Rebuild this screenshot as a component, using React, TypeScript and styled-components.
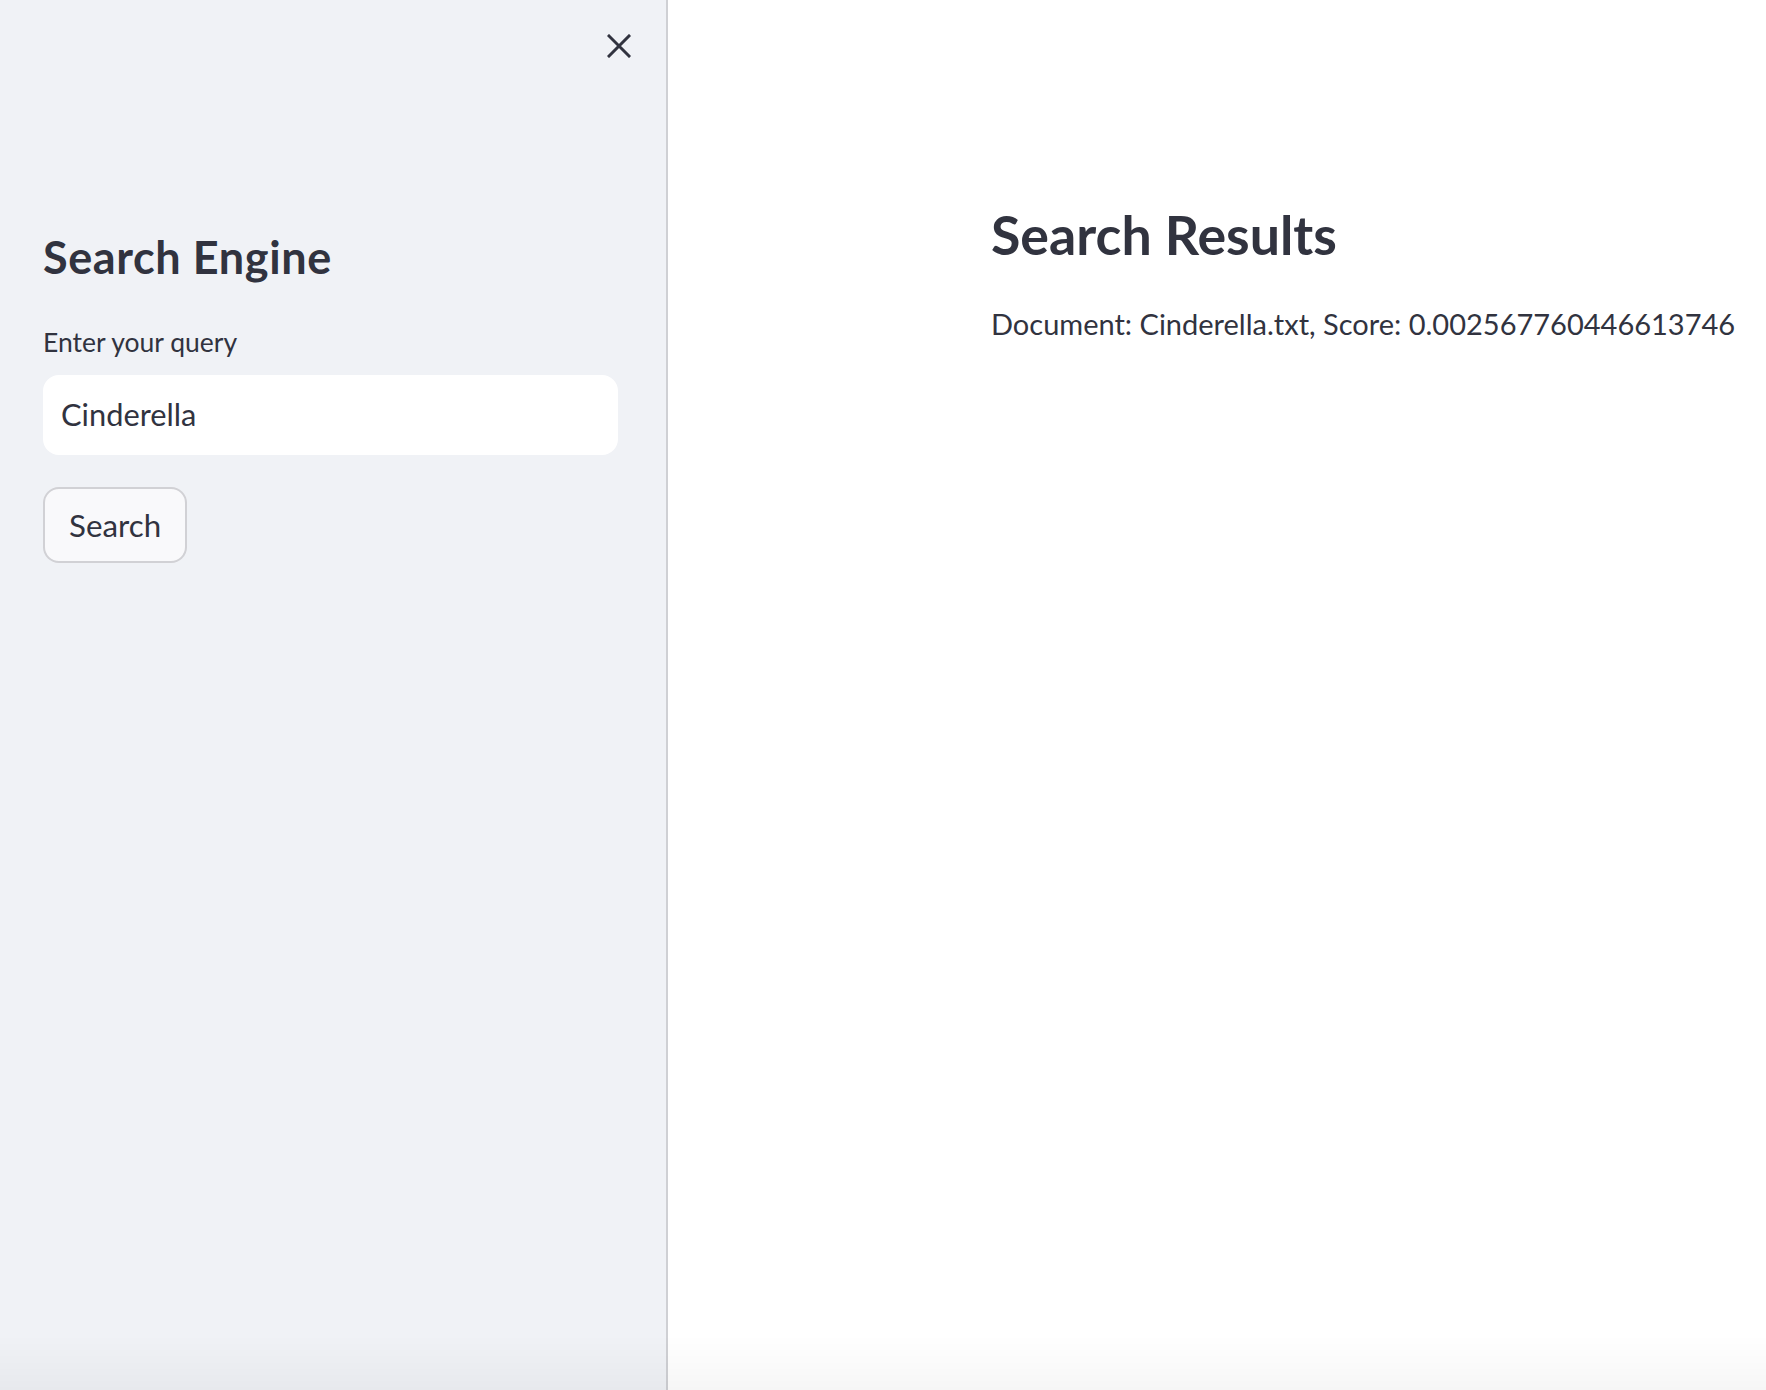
import React, { useState } from 'react';
import styled, { createGlobalStyle } from 'styled-components';

const GlobalStyle = createGlobalStyle`
  html, body {
    margin: 0;
    padding: 0;
    height: 100%;
    background: #ffffff;
  }
  body {
    font-family: Lato, 'Noto Sans', sans-serif;
    color: #31333f;
  }
  #root {
    height: 100%;
  }
`;

const Layout = styled.div`
  display: flex;
  height: 100vh;
  overflow: hidden;
`;

const Sidebar = styled.aside`
  width: 668px;
  flex-shrink: 0;
  box-sizing: border-box;
  padding: 0 48px 0 43px;
  background: #f0f2f6;
  border-right: 2px solid #cfd0d4;
  display: flex;
  flex-direction: column;
`;

const SidebarHeader = styled.div`
  display: flex;
  justify-content: flex-end;
  padding-top: 26px;
  margin-right: -21px;
`;

const CloseButton = styled.button`
  width: 40px;
  height: 40px;
  display: flex;
  align-items: center;
  justify-content: center;
  padding: 0;
  border: none;
  background: transparent;
  cursor: pointer;
  color: #31333f;
`;

const SidebarTitle = styled.h1`
  margin: 164px 0 0;
  font-size: 45px;
  line-height: 1.2;
  letter-spacing: 0.6px;
  font-weight: 700;
  color: #31333f;
`;

const FieldLabel = styled.label`
  display: block;
  margin-top: 43px;
  font-size: 26.5px;
  line-height: 1.2;
  color: #31333f;
`;

const QueryInput = styled.input`
  box-sizing: border-box;
  width: 100%;
  height: 80px;
  margin-top: 16px;
  padding: 0 16px;
  border: 2px solid #ffffff;
  border-radius: 16px;
  background: #ffffff;
  font-family: inherit;
  font-size: 30.8px;
  color: #31333f;
  outline: none;
`;

const SearchButton = styled.button`
  align-self: flex-start;
  box-sizing: border-box;
  height: 76px;
  margin-top: 32px;
  padding: 0 24px;
  border: 2px solid rgba(49, 51, 63, 0.2);
  border-radius: 16px;
  background: #f9f9fb;
  font-family: inherit;
  font-size: 31.3px;
  color: #31333f;
  cursor: pointer;
`;

const Main = styled.main`
  flex: 1;
  padding: 202px 0 0 323px;
  background: #ffffff;
  min-width: 0;
`;

const PageTitle = styled.h1`
  margin: 0;
  font-size: 53.7px;
  line-height: 1.2;
  font-weight: 700;
  color: #31333f;
`;

const ResultLine = styled.p`
  margin: 41px 0 0;
  font-size: 29px;
  line-height: 1.2;
  white-space: nowrap;
  color: #31333f;
`;

const BottomShade = styled.div`
  position: fixed;
  left: 0;
  right: 0;
  bottom: 0;
  height: 55px;
  pointer-events: none;
  background: linear-gradient(to bottom, rgba(0, 0, 0, 0), rgba(0, 0, 0, 0.035));
`;

const CloseIcon = () => (
  <svg width="24" height="24" viewBox="0 0 24 24" fill="none">
    <path d="M2 2 L22 22 M22 2 L2 22" stroke="currentColor" strokeWidth="3" strokeLinecap="square" />
  </svg>
);

const results = [{ doc: 'Cinderella.txt', score: '0.002567760446613746' }];

const App = () => {
  const [query, setQuery] = useState('Cinderella');

  return (
    <>
      <GlobalStyle />
      <Layout>
        <Sidebar>
          <SidebarHeader>
            <CloseButton aria-label="Close sidebar">
              <CloseIcon />
            </CloseButton>
          </SidebarHeader>
          <SidebarTitle>Search Engine</SidebarTitle>
          <FieldLabel htmlFor="query">Enter your query</FieldLabel>
          <QueryInput id="query" value={query} onChange={(e) => setQuery(e.target.value)} />
          <SearchButton>Search</SearchButton>
        </Sidebar>
        <Main>
          <PageTitle>Search Results</PageTitle>
          {results.map((r) => (
            <ResultLine key={r.doc}>
              Document: {r.doc}, Score: {r.score}
            </ResultLine>
          ))}
        </Main>
      </Layout>
      <BottomShade />
    </>
  );
};

export default App;
